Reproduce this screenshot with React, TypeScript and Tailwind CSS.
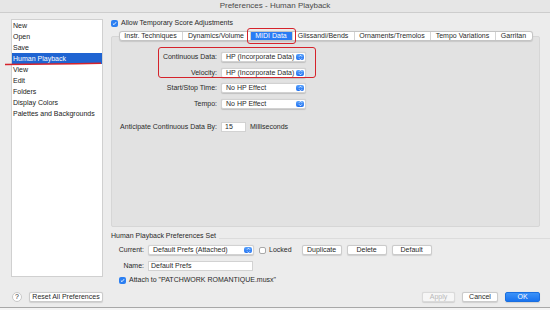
import React from "react";

const categories = [
  "New",
  "Open",
  "Save",
  "Human Playback",
  "View",
  "Edit",
  "Folders",
  "Display Colors",
  "Palettes and Backgrounds",
];

const tabs: [string, number][] = [
  ["Instr. Techniques", 62],
  ["Dynamics/Volume", 68],
  ["MIDI Data", 42],
  ["Glissandi/Bends", 62],
  ["Ornaments/Tremolos", 76],
  ["Tempo Variations", 65],
  ["Garritan", 37],
];

function Stepper() {
  return (
    <span className="absolute right-[1px] top-[1px] bottom-[1px] w-[8px] rounded-[2px] bg-gradient-to-b from-[#5aa2fb] to-[#1d6ff0] flex items-center justify-center">
      <svg width="5" height="7" viewBox="0 0 5 7">
        <path
          d="M1.1 2.6L2.5 1.2L3.9 2.6M1.1 4.4L2.5 5.8L3.9 4.4"
          stroke="white"
          strokeWidth="0.8"
          fill="none"
        />
      </svg>
    </span>
  );
}

function Select({ value, width }: { value: string; width: string }) {
  return (
    <div
      className={`relative ${width} h-[10px] bg-white rounded-[2px] border border-[#d2d2d2] shadow-[0_0.5px_1px_rgba(0,0,0,0.15)] text-[7px] leading-[8px] pl-[4px] text-[#2a2a2a]`}
    >
      {value}
      <Stepper />
    </div>
  );
}

function Check({ on }: { on: boolean }) {
  return on ? (
    <span className="w-[7px] h-[7px] rounded-[2px] bg-[#2b7ff2] flex items-center justify-center">
      <svg width="5" height="5" viewBox="0 0 5 5">
        <path d="M0.9 2.6L2 3.7L4.1 1.2" stroke="white" strokeWidth="0.9" fill="none" />
      </svg>
    </span>
  ) : (
    <span className="w-[7px] h-[7px] rounded-[2px] bg-white border border-[#a9a9a9]" />
  );
}

function Button({ label, width, kind }: { label: string; width: string; kind?: "primary" | "disabled" }) {
  const look =
    kind === "primary"
      ? "bg-gradient-to-b from-[#3c92f8] to-[#1873ef] text-white border-[#1a6fe0]"
      : kind === "disabled"
      ? "bg-[#f6f6f6] text-[#b8b8b8] border-[#dadada]"
      : "bg-white text-[#2a2a2a] border-[#cbcbcb]";
  return (
    <div
      className={`${width} h-[10px] rounded-[2px] border shadow-[0_0.5px_1px_rgba(0,0,0,0.12)] text-[7px] leading-[8px] text-center ${look}`}
    >
      {label}
    </div>
  );
}

export default function App() {
  return (
    <div className="relative w-[550px] h-[310px] bg-[#ececec] flex flex-col font-['Liberation_Sans',Arial,sans-serif] text-[#2a2a2a] overflow-hidden">
      <div className="h-[13px] bg-[#e6e6e6] border-b border-[#cdcdcd] text-[8px] leading-[12px] text-center text-[#4a4a4a]">
        Preferences - Human Playback
      </div>

      <div className="flex pt-[6px] pl-[11px]">
        <div className="w-[92px] h-[258px] bg-white border border-[#d0d0d0]">
          {categories.map((c) => (
            <div
              key={c}
              className={`h-[11px] text-[7px] leading-[11px] pl-[1px] ${
                c === "Human Playback" ? "bg-[#1f64d2] text-white" : "text-[#222]"
              }`}
            >
              {c}
            </div>
          ))}
        </div>

        <div className="ml-[8px] w-[429px] flex flex-col">
          <div className="h-[8px] flex items-center gap-[3px]">
            <Check on />
            <span className="text-[7px]">Allow Temporary Score Adjustments</span>
          </div>

          <div className="relative z-10 mt-[4px] flex justify-center">
            <div className="flex h-[10px] rounded-[3px] border border-[#c4c4c4] bg-white shadow-[0_0.5px_1px_rgba(0,0,0,0.12)]">
              {tabs.map(([t, w], i) => {
                const sel = t === "MIDI Data";
                return (
                  <div
                    key={t}
                    style={{ width: w }}
                    className={`relative text-[7px] leading-[8px] text-center ${
                      i > 0 ? "border-l border-[#d4d4d4]" : ""
                    } ${sel ? "bg-[#2a7cf4] text-white" : "text-[#2a2a2a]"}`}
                  >
                    {t}
                    {sel && (
                      <span className="absolute -left-[4px] -right-[4px] -top-[4px] -bottom-[4px] rounded-[3px] border-[1.5px] border-[#d5232b]" />
                    )}
                  </div>
                );
              })}
            </div>
          </div>

          <div className="relative -mt-[5px] h-[191px] bg-[#e2e2e2] border border-[#d6d6d6] rounded-[2px] pt-[15px]">
            <div className="flex flex-col gap-[5px]">
              {[
                ["Continuous Data:", "HP (Incorporate Data)"],
                ["Velocity:", "HP (Incorporate Data)"],
                ["Start/Stop Time:", "No HP Effect"],
                ["Tempo:", "No HP Effect"],
              ].map(([l, v]) => (
                <div key={l} className="flex items-center gap-[4px]">
                  <span className="w-[105px] text-right text-[7px]">{l}</span>
                  <Select value={v} width="w-[85px]" />
                </div>
              ))}
            </div>
            <div className="mt-[13px] flex items-center gap-[4px]">
              <span className="w-[105px] text-right text-[7px]">Anticipate Continuous Data By:</span>
              <div className="w-[25px] h-[10px] bg-white border border-[#d2d2d2] text-[7px] leading-[8px] pl-[3px]">
                15
              </div>
              <span className="text-[7px]">Milliseconds</span>
            </div>
            <span className="absolute left-[46px] top-[10px] w-[158px] h-[31px] rounded-[3px] border-[1.5px] border-[#d5232b]" />
          </div>

          <div className="mt-[5px] h-[8px] flex items-center -mr-[10px]">
            <span className="text-[7px]">Human Playback Preferences Set</span>
            <span className="flex-1 h-px bg-[#dcdcdc] ml-[3px] mt-[4px]" />
          </div>

          <div className="mt-[5px] h-[10px] flex items-center">
            <span className="w-[33px] text-right text-[7px]">Current:</span>
            <div className="ml-[4px]">
              <Select value="Default Prefs (Attached)" width="w-[106px]" />
            </div>
            <div className="ml-[5px] flex items-center gap-[3px]">
              <Check on={false} />
              <span className="text-[7px]">Locked</span>
            </div>
            <div className="ml-[10px] flex gap-[5px]">
              <Button label="Duplicate" width="w-[40px]" />
              <Button label="Delete" width="w-[40px]" />
              <Button label="Default" width="w-[40px]" />
            </div>
          </div>

          <div className="mt-[6px] h-[10px] flex items-center">
            <span className="w-[33px] text-right text-[7px]">Name:</span>
            <div className="ml-[4px] w-[105px] h-[10px] bg-white border border-[#d2d2d2] text-[7px] leading-[8px] pl-[2px]">
              Default Prefs
            </div>
          </div>

          <div className="mt-[5px] h-[8px] flex items-center gap-[3px] pl-[8px]">
            <Check on />
            <span className="text-[7px]">Attach to "PATCHWORK ROMANTIQUE.musx"</span>
          </div>
        </div>
      </div>

      <div className="mt-[8px] h-[10px] flex items-center justify-between pl-[12px] pr-[10px]">
        <div className="flex items-center gap-[7px]">
          <span className="w-[10px] h-[10px] rounded-full bg-white border border-[#c8c8c8] text-[7px] leading-[8px] text-center">
            ?
          </span>
          <Button label="Reset All Preferences" width="w-[74px]" />
        </div>
        <div className="flex items-center gap-[7px]">
          <Button label="Apply" width="w-[33px]" kind="disabled" />
          <Button label="Cancel" width="w-[36px]" />
          <Button label="OK" width="w-[35px]" kind="primary" />
        </div>
      </div>

      <div className="flex-1" />
      <div className="h-px bg-[#a8a8a8]" />
      <div className="h-[2px] bg-[#f4f4f4]" />

      <svg className="absolute left-0 top-0 pointer-events-none" width="550" height="310">
        <path d="M5 64.5 Q50 64.2 101 63.2" stroke="#d5232b" strokeWidth="1.4" fill="none" />
      </svg>
    </div>
  );
}
